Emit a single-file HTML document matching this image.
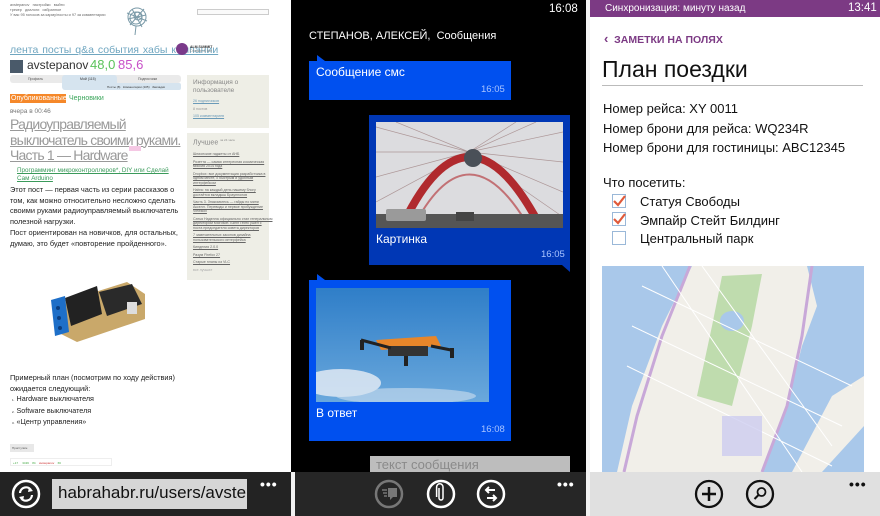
<!DOCTYPE html>
<html><head><meta charset="utf-8"><style>
*{margin:0;padding:0;box-sizing:border-box}
body{width:880px;height:516px;overflow:hidden;background:#f2f2f2;font-family:"Liberation Sans","DejaVu Sans",sans-serif;position:relative}
.a{position:absolute;white-space:nowrap}
.u{text-decoration:underline}
.sb a,.sb div{display:block;font-size:3.6px;color:#666;text-decoration:underline;margin-bottom:3px;line-height:4.5px}
</style></head><body>

<!-- LEFT PANEL -->
<div class="a" style="left:0;top:0;width:291px;height:516px;background:#fff"></div>
<div class="a" style="left:291px;top:0;width:4px;height:472px;background:#000"></div>
<div class="a" style="left:10px;top:3px;font-size:3.8px;color:#666;line-height:5px">avstepanov &nbsp; настройки &nbsp; выйти<br>трекер &nbsp; диалоги &nbsp; избранное<br>У вас 95 голосов за карму/посты и 97 за комментарии</div>
<svg class="a" style="left:122px;top:3px" width="30" height="34"><g stroke="#7a9aa8" stroke-width="1" fill="none"><circle cx="15" cy="14" r="9"/><circle cx="14" cy="15" r="6"/><circle cx="16" cy="13" r="4"/><path d="M5 10 L25 18 M8 22 L22 6 M6 16 L24 12 M14 23 L13 32 M10 6 L20 24"/></g></svg>
<div class="a" style="left:197px;top:9px;width:72px;height:6px;border:1px solid #ccc;background:#fafafa"></div>
<div class="a u" style="left:10px;top:44px;font-size:10.5px;color:#6fa6c0;word-spacing:1px">лента посты q&amp;a события хабы компании</div>
<div class="a" style="left:176px;top:43px;width:12px;height:12px;border-radius:50%;background:#7a3a8a"></div>
<div class="a" style="left:190px;top:45px;font-size:3.5px;color:#333;font-weight:bold">ALM SUMMIT<br><span style="font-weight:normal;color:#888">Онлайн &amp; live</span></div>
<div class="a" style="left:10px;top:60px;width:13px;height:13px;background:#4a5a6a"></div>
<div class="a" style="left:27px;top:58px;font-size:12px;color:#333">avstepanov</div>
<div class="a" style="left:90px;top:57px;font-size:13px;color:#5bc35b">48,0</div>
<div class="a" style="left:118px;top:57px;font-size:13px;color:#c850c8">85,6</div>
<div class="a" style="left:10px;top:75px;width:171px;height:8px;background:#eaeaea;border-radius:3px"></div>
<div class="a" style="left:62px;top:75px;width:55px;height:15px;background:#d6e4ef;border-radius:3px"></div>
<div class="a" style="left:105px;top:83px;width:76px;height:7px;background:#d6e4ef;border-radius:2px"></div>
<div class="a" style="left:28px;top:77px;font-size:3.5px;color:#555">Профиль</div>
<div class="a" style="left:80px;top:77px;font-size:3.5px;color:#333">Мой (115)</div>
<div class="a" style="left:138px;top:77px;font-size:3.5px;color:#555">Подписчики</div>
<div class="a" style="left:107px;top:85px;font-size:3px;color:#333">Посты (8) &nbsp; Комментарии (105) &nbsp; Закладки</div>
<div class="a" style="left:10px;top:94px;background:#f5882a;color:#fff;font-size:7px;padding:1px 1px;width:56px">Опубликованные</div>
<div class="a" style="left:69px;top:95px;color:#3aa55a;font-size:7px">Черновики</div>
<div class="a" style="left:10px;top:108px;color:#777;font-size:6.5px">вчера в 00:46</div>
<div class="a u" style="left:10px;top:117px;color:#999;font-size:14px;line-height:15.5px;letter-spacing:-0.8px">Радиоуправляемый<br>выключатель своими руками.<br>Часть 1 — Hardware</div>
<div class="a" style="left:129px;top:146px;background:#f5c8e4;width:12px;height:5px"></div>
<div class="a u" style="left:17px;top:167px;color:#3a9a5a;font-size:6.3px;line-height:8px">Программинг микроконтроллеров*, DIY или Сделай<br>Сам Arduino</div>
<div class="a" style="left:10px;top:185px;color:#222;font-size:7.4px;line-height:10.7px">Этот пост — первая часть из серии рассказов о<br>том, как можно относительно несложно сделать<br>своими руками радиоуправляемый выключатель<br>полезной нагрузки.<br>Пост ориентирован на новичков, для остальных,<br>думаю, это будет «повторение пройденного».</div>
<div class="a" style="left:187px;top:75px;width:82px;height:53px;background:#eeeee6"></div>
<div class="a" style="left:193px;top:79px;font-size:6.5px;color:#888;line-height:8px">Информация о<br>пользователе</div>
<div class="a sb" style="left:193px;top:99px"><a style="color:#6a9ab8">26 подписчиков</a><div style="text-decoration:none;color:#999">8 постов</div><a style="color:#6a9ab8">105 комментариев</a></div>
<div class="a" style="left:187px;top:133px;width:82px;height:147px;background:#eeeee6"></div>
<div class="a" style="left:193px;top:138px;font-size:7px;color:#888">Лучшее <sup style="font-size:3px">за 24 часа</sup></div>
<div class="a sb" style="left:193px;top:152px"><a>Шпионские гаджеты от АНБ</a><a>Розетта — самая интересная космическая<br>миссия 2014 года</a><a>Dropbox: все документация разработчика в<br>одном месте, с быстрым и удобным<br>интерфейсом</a><a>Habrа: на каждый день нашему блогу<br>достаётся вкладыш Браунполов</a><a>Часть 3. Знакомьтесь — гайды по мини<br>Акселл. Переводы и первое пробуждение<br>ViewBox</a><a>Сатья Наделла официально стал генеральным<br>директором Microsoft. Билл Гейтс ушёл с<br>поста председателя совета директоров</a><a>7 замечательных законов дизайна<br>пользовательского интерфейса</a><a>Кинделия 2.0.0</a><a>Разум Firefox 27</a><a>Старые планы из VLC</a><div style="text-decoration:none;color:#aaa">все лучшие</div></div>
<!-- relay board -->
<svg class="a" style="left:47px;top:274px" width="100" height="70">
<path d="M10 30 L80 8 L98 20 L98 45 L30 68 L10 58 Z" fill="#c9a86a"/>
<path d="M18 24 L50 12 L55 40 L24 52 Z" fill="#222"/>
<path d="M52 18 L85 10 L95 30 L60 42 Z" fill="#2a2a2a"/>
<path d="M4 26 L18 22 L22 58 L8 62 Z" fill="#1e6fc8"/>
<circle cx="11" cy="34" r="2" fill="#0b3e80"/><circle cx="12" cy="44" r="2" fill="#0b3e80"/><circle cx="13" cy="54" r="2" fill="#0b3e80"/>
<rect x="80" y="28" width="10" height="12" fill="#ddd"/>
</svg>
<div class="a" style="left:10px;top:373px;color:#222;font-size:7.4px;line-height:10.7px">Примерный план (посмотрим по ходу действия)<br>ожидается следующий:</div>
<div class="a" style="left:12px;top:394px;color:#222;font-size:7.2px;line-height:10.5px"><span style="font-size:3px">1.</span> Hardware выключателя<br><span style="font-size:3px">2.</span> Software выключателя<br><span style="font-size:3px">3.</span> «Центр управления»</div>
<div class="a" style="left:10px;top:444px;width:24px;height:8px;background:#e8e8e8;font-size:3px;color:#555;padding:2px">Приступим</div>
<div class="a" style="left:10px;top:458px;width:102px;height:8px;border:1px solid #eee;font-size:3px;color:#4a4;padding:2px">+17 &nbsp;&nbsp;&nbsp; 3436 &nbsp;&nbsp; 84 &nbsp;&nbsp; <span style="color:#c33">avstepanov</span> &nbsp;&nbsp; 66</div>
<div class="a" style="left:0;top:472px;width:291px;height:44px;background:#232323"></div>
<svg class="a" style="left:11px;top:479px" width="30" height="30"><circle cx="15" cy="15" r="13" fill="none" stroke="#fff" stroke-width="2.5"/><path d="M9 14 A6 6 0 0 1 20 11 M21 16 A6 6 0 0 1 10 19" stroke="#fff" stroke-width="2.2" fill="none"/><path d="M18 8 L22 12 L17 13Z M12 22 L8 18 L13 17Z" fill="#fff"/></svg>
<div class="a" style="left:52px;top:479px;width:195px;height:30px;background:#d6d6d6;overflow:hidden"><div class="a" style="left:6px;top:4px;font-size:17px;color:#111">habrahabr.ru/users/avstepanov</div></div>
<div class="a" style="left:260px;top:476px;font-size:14px;color:#fff;letter-spacing:1px;font-weight:bold">•••</div>

<!-- MIDDLE PANEL -->
<div class="a" style="left:295px;top:0;width:291px;height:516px;background:#000"></div>
<div class="a" style="left:549px;top:3px;font-size:11.5px;color:#fff">16:08</div>
<div class="a" style="left:309px;top:30px;font-size:11px;color:#fff">СТЕПАНОВ, АЛЕКСЕЙ, &nbsp;Сообщения</div>
<div class="a" style="left:317px;top:55px;width:0;height:0;border-right:8px solid transparent;border-bottom:6px solid #0050ef"></div>
<div class="a" style="left:309px;top:61px;width:202px;height:39px;background:#0050ef"></div>
<div class="a" style="left:316px;top:65px;font-size:12px;color:#fff">Сообщение смс</div>
<div class="a" style="left:481px;top:84px;font-size:9.5px;color:#a9c4ff">16:05</div>
<div class="a" style="left:369px;top:115px;width:201px;height:150px;background:#0037b5"></div>
<div class="a" style="left:562px;top:265px;width:0;height:0;border-left:8px solid transparent;border-top:7px solid #0037b5"></div>
<svg class="a" style="left:376px;top:122px" width="187" height="106">
<rect width="187" height="106" fill="#dcdcdf"/>
<g stroke="#9a7a7a" stroke-width="0.7" opacity="0.7"><path d="M93 30 L0 5 M93 30 L0 30 M93 30 L20 0 M93 30 L187 10 M93 30 L187 40 M93 30 L160 0 M93 30 L0 55 M93 30 L187 70 M93 30 L140 0 M93 30 L0 80 M93 30 L187 95"/></g>
<path d="M28 100 Q92 -30 162 100" fill="none" stroke="#b02a2e" stroke-width="8"/>
<path d="M40 100 Q92 5 150 100" fill="none" stroke="#b02a2e" stroke-width="2" opacity="0.6"/>
<circle cx="97" cy="36" r="9" fill="#4a5058"/>
<rect x="0" y="92" width="187" height="14" fill="#555"/>
<rect x="10" y="87" width="40" height="12" rx="2" fill="#9a9a9a"/><rect x="80" y="90" width="18" height="9" fill="#444"/>
</svg>
<div class="a" style="left:376px;top:232px;font-size:12px;color:#fff">Картинка</div>
<div class="a" style="left:541px;top:249px;font-size:9.5px;color:#a9c4ff">16:05</div>
<div class="a" style="left:317px;top:274px;width:0;height:0;border-right:8px solid transparent;border-bottom:6px solid #0050ef"></div>
<div class="a" style="left:309px;top:280px;width:202px;height:161px;background:#0050ef"></div>
<svg class="a" style="left:316px;top:288px" width="173" height="114">
<defs><linearGradient id="sk" x1="0" y1="0" x2="0" y2="1"><stop offset="0" stop-color="#2f7ec8"/><stop offset="1" stop-color="#6aa8dc"/></linearGradient></defs>
<rect width="173" height="114" fill="url(#sk)"/>
<ellipse cx="25" cy="95" rx="40" ry="14" fill="#e8eef5" opacity="0.8"/><ellipse cx="90" cy="108" rx="70" ry="8" fill="#cfe0ef" opacity="0.6"/>
<path d="M60 52 L120 48 L125 58 L65 62 Z" fill="#e8862a"/>
<rect x="72" y="58" width="40" height="10" fill="#333"/>
<path d="M45 52 L75 60 M115 58 L135 62" stroke="#222" stroke-width="3"/>
<rect x="44" y="52" width="4" height="10" fill="#222"/><rect x="134" y="60" width="4" height="10" fill="#222"/>
<rect x="88" y="68" width="4" height="10" fill="#222"/>
</svg>
<div class="a" style="left:316px;top:406px;font-size:12px;color:#fff">В ответ</div>
<div class="a" style="left:481px;top:424px;font-size:9.5px;color:#a9c4ff">16:08</div>
<div class="a" style="left:370px;top:456px;width:200px;height:16px;background:#bdbdbd;overflow:hidden"><div class="a" style="left:6px;top:1px;font-size:13px;color:#8a8a8a">текст сообщения</div></div>
<div class="a" style="left:295px;top:472px;width:291px;height:44px;background:#262626"></div>
<svg class="a" style="left:374px;top:479px" width="30" height="30"><circle cx="15" cy="15" r="13" fill="none" stroke="#777" stroke-width="2.5"/><path d="M8 11h5M9 14h4M10 17h3" stroke="#777" stroke-width="1.5"/><path d="M14 9h9v9h-4l-3 3v-3h-2z" fill="#777"/></svg>
<svg class="a" style="left:426px;top:479px" width="30" height="30"><circle cx="15" cy="15" r="13" fill="none" stroke="#fff" stroke-width="2.5"/><path d="M13 9v10a2 2 0 0 0 4 0v-11a3.2 3.2 0 0 0-6.4 0v10" fill="none" stroke="#fff" stroke-width="1.5"/></svg>
<svg class="a" style="left:476px;top:479px" width="30" height="30"><circle cx="15" cy="15" r="13" fill="none" stroke="#fff" stroke-width="2.5"/><path d="M19 11h-9M13 8l-3 3 3 3M11 19h9M17 16l3 3-3 3" fill="none" stroke="#fff" stroke-width="2"/></svg>
<div class="a" style="left:557px;top:476px;font-size:14px;color:#fff;letter-spacing:1px;font-weight:bold">•••</div>

<!-- RIGHT PANEL -->
<div class="a" style="left:590px;top:0;width:290px;height:516px;background:#fff"></div>
<div class="a" style="left:590px;top:0;width:290px;height:17px;background:#7c3a84"></div>
<div class="a" style="left:605px;top:3px;font-size:10px;color:#fff">Синхронизация: минуту назад</div>
<div class="a" style="left:848px;top:2px;font-size:11.5px;color:#fff">13:41</div>
<div class="a" style="left:604px;top:31px;font-size:10.5px;color:#7c3a84;font-weight:bold"><span style="font-size:13px">‹</span> &nbsp;ЗАМЕТКИ НА ПОЛЯХ</div>
<div class="a" style="left:602px;top:56px;font-size:23px;color:#111">План поездки</div>
<div class="a" style="left:602px;top:85px;width:261px;height:1px;background:#bbb"></div>
<div class="a" style="left:603px;top:99px;font-size:13px;color:#111;line-height:19.5px">Номер рейса: XY 0011<br>Номер брони для рейса: WQ234R<br>Номер брони для гостиницы: ABC12345</div>
<div class="a" style="left:603px;top:175px;font-size:13px;color:#111">Что посетить:</div>
<div class="a" style="left:612px;top:194px;width:14px;height:14px;border:1px solid #9ab8d8"></div>
<div class="a" style="left:612px;top:212px;width:14px;height:14px;border:1px solid #9ab8d8"></div>
<div class="a" style="left:612px;top:231px;width:14px;height:14px;border:1px solid #9ab8d8"></div>
<svg class="a" style="left:612px;top:194px" width="15" height="33"><path d="M2 7l4 4 7-9M2 25l4 4 7-9" fill="none" stroke="#e05a3a" stroke-width="2.2"/></svg>
<div class="a" style="left:640px;top:193px;font-size:13px;color:#111;line-height:18.5px">Статуя Свободы<br>Эмпайр Стейт Билдинг<br>Центральный парк</div>
<svg class="a" style="left:602px;top:266px" width="262" height="206">
<rect width="262" height="206" fill="#f1efe9"/>
<path d="M0 30 L0 0 L50 0 L90 0 L60 60 L30 140 L15 206 L0 206Z" fill="#a9c8ea"/>
<path d="M205 0 L262 0 L262 110 L230 130 L190 206 L160 206 L185 140 L200 80 L215 40 Z" fill="#a9c8ea"/>
<path d="M262 160 L262 206 L220 206Z" fill="#a9c8ea"/>
<path d="M120 10 L160 8 L150 60 L130 140 L95 130 L110 60 Z" fill="#bfdcae"/>
<ellipse cx="130" cy="55" rx="12" ry="10" fill="#a9c8ea"/>
<path d="M88 0 L60 70 L35 150 L22 206" stroke="#c8a8d8" stroke-width="3" fill="none"/>
<path d="M210 0 L200 70 L185 140 L160 206" stroke="#c8a8d8" stroke-width="3" fill="none"/>
<g stroke="#fff" stroke-width="1"><path d="M40 20 L250 120 M30 60 L240 160 M25 100 L230 200 M60 0 L200 206 M100 0 L230 180"/></g>
<rect x="120" y="150" width="40" height="40" fill="#c8c8f0" opacity="0.7"/>
</svg>
<div class="a" style="left:590px;top:472px;width:290px;height:44px;background:#e0e0e0"></div>
<svg class="a" style="left:694px;top:479px" width="30" height="30"><circle cx="15" cy="15" r="13" fill="none" stroke="#111" stroke-width="2.3"/><path d="M15 8v14M8 15h14" stroke="#111" stroke-width="2.5"/></svg>
<svg class="a" style="left:745px;top:479px" width="30" height="30"><circle cx="15" cy="15" r="13" fill="none" stroke="#111" stroke-width="2.3"/><circle cx="16.5" cy="13" r="4" fill="none" stroke="#111" stroke-width="1.8"/><path d="M13.5 16l-4 4" stroke="#111" stroke-width="2"/></svg>
<div class="a" style="left:849px;top:476px;font-size:14px;color:#111;letter-spacing:1px;font-weight:bold">•••</div>
</body></html>
